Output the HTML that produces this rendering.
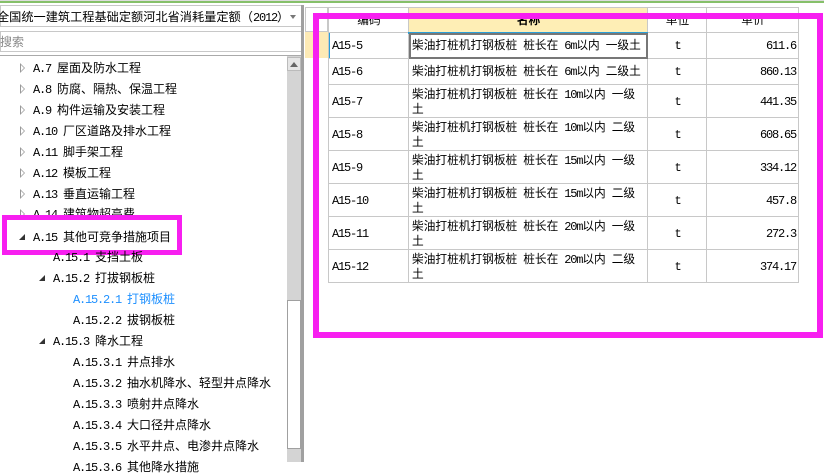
<!DOCTYPE html>
<html><head><meta charset="utf-8"><style>
*{margin:0;padding:0;box-sizing:border-box}
body{width:824px;height:462px;overflow:hidden;background:#fff;font-family:"Noto Sans CJK SC","WenQuanYi Zen Hei",sans-serif;font-size:12px;color:#000;position:relative}
.abs{position:absolute}
.tr{position:absolute;white-space:nowrap;font-size:12px;line-height:16px}
.tri{position:absolute;width:0;height:0}
.l{font-family:"Liberation Mono",monospace;font-size:12px;letter-spacing:-1.2px}
.g td{border:1px solid #c8c8c8;font-size:11.7px;padding:0 2px 0 3px;line-height:14px;white-space:nowrap;overflow:hidden}
</style></head><body>
<div class="abs" style="left:0;top:0;width:824px;height:1px;background:#ddd"></div>
<div class="abs" style="left:0;top:1px;width:824px;height:2px;background:#86c06a"></div>
<!-- left panel -->
<div class="abs" style="left:0;top:5px;width:302px;height:22px;border:1px solid #c8c8c8;background:#fff"></div>
<div class="tr w" style="left:-3px;top:8px;font-size:12.2px">全国统一建筑工程基础定额河北省消耗量定额（2012）</div>
<div class="abs" style="left:290px;top:15px;border-left:3px solid transparent;border-right:3px solid transparent;border-top:4px solid #777"></div>
<div class="abs" style="left:0;top:31px;width:302px;height:21px;border:1px solid #c8c8c8"></div>
<div class="tr" style="left:0;top:34px;color:#888;font-size:12px">搜索</div>
<div class="abs" style="left:0;top:55px;width:302px;height:1px;background:#aaa"></div>
<!-- scrollbar -->
<div class="abs" style="left:287px;top:56px;width:14px;height:406px;background:#d4d4d4"></div>
<div class="abs" style="left:287px;top:57px;width:14px;height:14px;background:#e6e6e6;border:1px solid #bbb"></div>
<div class="abs" style="left:290px;top:62px;border-left:4px solid transparent;border-right:4px solid transparent;border-bottom:5px solid #666"></div>
<div class="abs" style="left:287px;top:300px;width:14px;height:149px;background:#fff;border:1px solid #a0a0a0"></div>
<div class="abs" style="left:301px;top:5px;width:3px;height:457px;background:#a0a0a0"></div>
<!-- grid -->
<div class="abs" style="left:305px;top:7px;width:23px;height:25px;border:1px solid #c8c8c8"></div>
<div class="abs" style="left:305px;top:32px;width:23px;height:26px;background:#fdeab5"></div>
<div class="abs" style="left:328px;top:32px;width:2px;height:26px;background:#2a9fd8"></div>
<table class="g abs w" style="left:328px;top:7px;border-collapse:collapse;table-layout:fixed;width:470px">
<colgroup><col style="width:80px"><col style="width:239px"><col style="width:59px"><col style="width:92px"></colgroup>
<tr style="height:25px"><td style="text-align:center">编码</td><td style="text-align:center;background:#feeeb5;font-weight:bold;border-bottom:2px solid #2a9fd8">名称</td><td style="text-align:center">单位</td><td style="text-align:center">单价</td></tr>
<tr style="height:26px"><td>A15-5</td><td style="outline:2px solid #777;outline-offset:-2px">柴油打桩机打钢板桩 桩长在 6m以内 一级土</td><td style="text-align:center">t</td><td style="text-align:right">611.6</td></tr>
<tr style="height:26px"><td>A15-6</td><td>柴油打桩机打钢板桩 桩长在 6m以内 二级土</td><td style="text-align:center">t</td><td style="text-align:right">860.13</td></tr>
<tr style="height:33px"><td>A15-7</td><td>柴油打桩机打钢板桩 桩长在 10m以内 一级<br>土</td><td style="text-align:center">t</td><td style="text-align:right">441.35</td></tr>
<tr style="height:33px"><td>A15-8</td><td>柴油打桩机打钢板桩 桩长在 10m以内 二级<br>土</td><td style="text-align:center">t</td><td style="text-align:right">608.65</td></tr>
<tr style="height:33px"><td>A15-9</td><td>柴油打桩机打钢板桩 桩长在 15m以内 一级<br>土</td><td style="text-align:center">t</td><td style="text-align:right">334.12</td></tr>
<tr style="height:33px"><td>A15-10</td><td>柴油打桩机打钢板桩 桩长在 15m以内 二级<br>土</td><td style="text-align:center">t</td><td style="text-align:right">457.8</td></tr>
<tr style="height:33px"><td>A15-11</td><td>柴油打桩机打钢板桩 桩长在 20m以内 一级<br>土</td><td style="text-align:center">t</td><td style="text-align:right">272.3</td></tr>
<tr style="height:33px"><td>A15-12</td><td>柴油打桩机打钢板桩 桩长在 20m以内 二级<br>土</td><td style="text-align:center">t</td><td style="text-align:right">374.17</td></tr>
</table>
<!-- magenta boxes -->
<div class="abs" style="left:313px;top:13px;width:510px;height:325px;border:6px solid #f71ff0"></div>
<div id="tree"></div>
<script>
var items=[
[1,'A.7 屋面及防水工程','c',68],[1,'A.8 防腐、隔热、保温工程','c',89],[1,'A.9 构件运输及安装工程','c',110],
[1,'A.10 厂区道路及排水工程','c',131],[1,'A.11 脚手架工程','c',152],[1,'A.12 模板工程','c',173],
[1,'A.13 垂直运输工程','c',194],[1,'A.14 建筑物超高费','c',214],[1,'A.15 其他可竞争措施项目','o',237],
[2,'A.15.1 支挡土板','n',257],[2,'A.15.2 打拔钢板桩','o',278],[3,'A.15.2.1 打钢板桩','s',299],
[3,'A.15.2.2 拔钢板桩','n',320],[2,'A.15.3 降水工程','o',341],[3,'A.15.3.1 井点排水','n',362],
[3,'A.15.3.2 抽水机降水、轻型井点降水','n',383],[3,'A.15.3.3 喷射井点降水','n',404],
[3,'A.15.3.4 大口径井点降水','n',425],[3,'A.15.3.5 水平井点、电渗井点降水','n',446],[3,'A.15.3.6 其他降水措施','n',467]];
var h='';
items.forEach(function(it){
var x=13+20*(it[0]-1);
var y=it[3]-8;
if(it[2]=='c')h+='<div class="tri" style="left:'+(x+7)+'px;top:'+(y+3)+'px;border-top:5px solid transparent;border-bottom:5px solid transparent;border-left:5px solid #999"></div><div class="tri" style="left:'+(x+8)+'px;top:'+(y+5)+'px;border-top:3px solid transparent;border-bottom:3px solid transparent;border-left:3px solid #fff"></div>';
if(it[2]=='o')h+='<div class="tri" style="left:'+(x+6)+'px;top:'+(y+5)+'px;border-left:6px solid transparent;border-bottom:6px solid #333"></div>';
h+='<div class="tr w" style="left:'+(x+20)+'px;top:'+y+'px;color:'+(it[2]=='s'?'#1e90ff':'#000')+'">'+it[1]+'</div>';
if(it[3]==214)h+='<div class="abs" style="left:2px;top:215px;width:180px;height:40px;border:5px solid #f71ff0;background:#fff"></div>';
});
document.getElementById('tree').innerHTML=h;
function wrap(el){
 for(var i=0;i<el.childNodes.length;i++){
  var n=el.childNodes[i];
  if(n.nodeType==3){
   var s=n.nodeValue;
   if(/[\x20-\x7e]/.test(s)){
    var sp=document.createElement('span');
    sp.innerHTML=s.replace(/&/g,'&amp;').replace(/</g,'&lt;').replace(/([\x20-\x7e]+)/g,'<span class="l" style="white-space:pre">$1</span>');
    el.replaceChild(sp,n);
   }
  } else if(n.nodeType==1 && n.className!='l') wrap(n);
 }
}
document.querySelectorAll('.w').forEach(wrap);
</script>
</body></html>
